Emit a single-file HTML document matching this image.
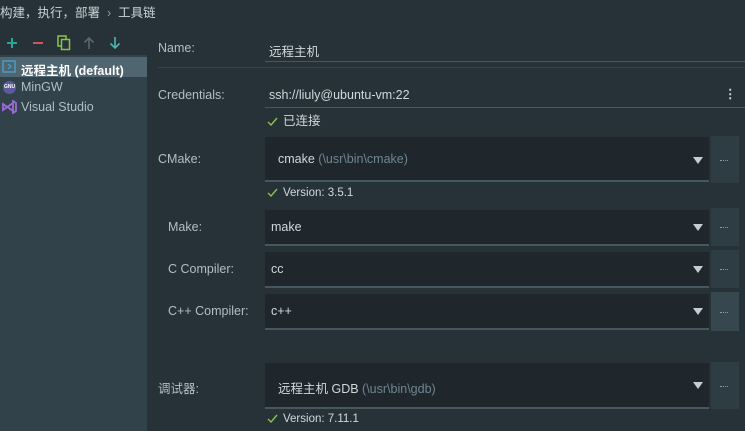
<!DOCTYPE html>
<html><head><meta charset="utf-8"><style>
*{margin:0;padding:0;box-sizing:border-box}
body{width:745px;height:431px;overflow:hidden;background:#263238;font-family:"Liberation Sans","Noto Sans CJK SC",sans-serif;font-size:12.5px;color:#b0bec5;position:relative}
.a{position:absolute;white-space:nowrap}
.left{position:absolute;left:0;top:55px;width:147px;height:376px;background:#32424a}
.sel{position:absolute;left:0;top:57px;width:147px;height:20px;background:#4f6670}
.box{position:absolute;left:265px;width:444px;background:#1f272d;border-bottom:2px solid #46585f}
.btn{position:absolute;left:711px;width:28px;background:#2e3c43}
.btn:after{content:"";position:absolute;left:9px;top:50%;width:8px;height:1px;border-top:1px dotted #7fa0b0}
.arr{position:absolute;left:693px;width:0;height:0;border-left:5px solid transparent;border-right:5px solid transparent;border-top:7px solid #c5ced3}
.lab{color:#b0bec5}
.val{color:#d0d8dc}
.dim{color:#6f8590}
.ck{display:inline-block;vertical-align:middle;margin-right:5px}
</style></head><body>
<div class="a" style="left:0;top:2px;color:#c8d2d7">构建，执行，部署 <span style="color:#8a9aa3">&nbsp;›&nbsp;</span> 工具链</div>
<div class="left"></div>
<div class="sel"></div>
<svg class="a" style="left:6px;top:37px" width="12" height="12"><path d="M6 1v10M1 6h10" stroke="#26a69a" stroke-width="2"/></svg>
<svg class="a" style="left:32px;top:37px" width="12" height="12"><path d="M1 6h10" stroke="#d0545a" stroke-width="2"/></svg>
<svg class="a" style="left:57px;top:35px" width="14" height="16"><rect x="1" y="1" width="8" height="10" fill="none" stroke="#8bc34a" stroke-width="1.5"/><rect x="4.5" y="4.5" width="8" height="10" fill="#263238" stroke="#8bc34a" stroke-width="1.5"/></svg>
<svg class="a" style="left:83px;top:36px" width="12" height="14"><path d="M6 13V2M1.5 6.5L6 2l4.5 4.5" fill="none" stroke="#58676e" stroke-width="1.6"/></svg>
<svg class="a" style="left:109px;top:36px" width="12" height="14"><path d="M6 1v11M1.5 7.5L6 12l4.5-4.5" fill="none" stroke="#4db6ac" stroke-width="1.6"/></svg>
<svg class="a" style="left:2px;top:60px" width="15" height="14"><rect x="1" y="1" width="12" height="11" fill="none" stroke="#4a9cc4" stroke-width="1.5"/><path d="M6 4l3 2.5-3 2.5" fill="none" stroke="#4a9cc4" stroke-width="1.3"/></svg>
<div class="a" style="left:21px;top:60px;color:#fff;font-weight:bold">远程主机 (default)</div>
<div class="a" style="left:3px;top:81px;width:13px;height:13px;border-radius:50%;background:#5c5a9a;color:#fff;font-size:5px;line-height:13px;text-align:center;font-weight:bold">GNU</div>
<div class="a" style="left:21px;top:80px;color:#b0bec5">MinGW</div>
<svg class="a" style="left:2px;top:100px" width="15" height="14"><path d="M1 4l10 7V3L1 10z M11 1l3 2v8l-3 2z" fill="none" stroke="#9b6bd8" stroke-width="1.8"/></svg>
<div class="a" style="left:21px;top:100px;color:#b0bec5">Visual Studio</div>

<div class="a lab" style="left:158px;top:41px">Name:</div>
<div class="a val" style="left:269px;top:41px">远程主机</div>
<div class="a" style="left:265px;top:61px;width:480px;height:1px;background:#46585f"></div>
<div class="a" style="left:158px;top:67px;width:587px;height:1px;background:#34444c"></div>
<div class="a lab" style="left:158px;top:88px">Credentials:</div>
<div class="a val" style="left:269px;top:88px">ssh://liuly@ubuntu-vm:22</div>
<div class="a val" style="left:724px;top:86px;font-weight:bold">⋮</div>
<div class="a" style="left:265px;top:107px;width:480px;height:1px;background:#46585f"></div>
<div class="a" style="left:267px;top:110px"><svg class="ck" width="11" height="9"><path d="M1 5l3 3 6-7" fill="none" stroke="#8bc34a" stroke-width="1.4"/></svg><span class="val">已连接</span></div>

<div class="a lab" style="left:158px;top:152px">CMake:</div>
<div class="box" style="top:137px;height:45px"></div>
<div class="a val" style="left:278px;top:152px">cmake <span class="dim">(\usr\bin\cmake)</span></div>
<div class="arr" style="top:157px"></div>
<div class="btn" style="top:136px;height:47px"></div>
<div class="a" style="left:267px;top:187px;font-size:11.5px"><svg class="ck" width="11" height="9"><path d="M1 5l3 3 6-7" fill="none" stroke="#8bc34a" stroke-width="1.4"/></svg><span class="val">Version: 3.5.1</span></div>

<div class="a lab" style="left:168px;top:220px">Make:</div>
<div class="box" style="top:210px;height:36px"></div>
<div class="a val" style="left:271px;top:220px">make</div>
<div class="arr" style="top:224px"></div>
<div class="btn" style="top:208px;height:38px"></div>

<div class="a lab" style="left:168px;top:262px">C Compiler:</div>
<div class="box" style="top:252px;height:36px"></div>
<div class="a val" style="left:271px;top:262px">cc</div>
<div class="arr" style="top:266px"></div>
<div class="btn" style="top:250px;height:38px"></div>

<div class="a lab" style="left:168px;top:304px">C++ Compiler:</div>
<div class="box" style="top:294px;height:36px"></div>
<div class="a val" style="left:271px;top:304px">c++</div>
<div class="arr" style="top:308px"></div>
<div class="btn" style="top:292px;height:39px;background:#37474f"></div>

<div class="a lab" style="left:158px;top:378px">调试器:</div>
<div class="box" style="top:363px;height:46px"></div>
<div class="a val" style="left:278px;top:378px">远程主机 GDB <span class="dim">(\usr\bin\gdb)</span></div>
<div class="arr" style="top:382px"></div>
<div class="btn" style="top:362px;height:47px"></div>
<div class="a" style="left:267px;top:413px;font-size:11.5px"><svg class="ck" width="11" height="9"><path d="M1 5l3 3 6-7" fill="none" stroke="#8bc34a" stroke-width="1.4"/></svg><span class="val">Version: 7.11.1</span></div>
</body></html>
